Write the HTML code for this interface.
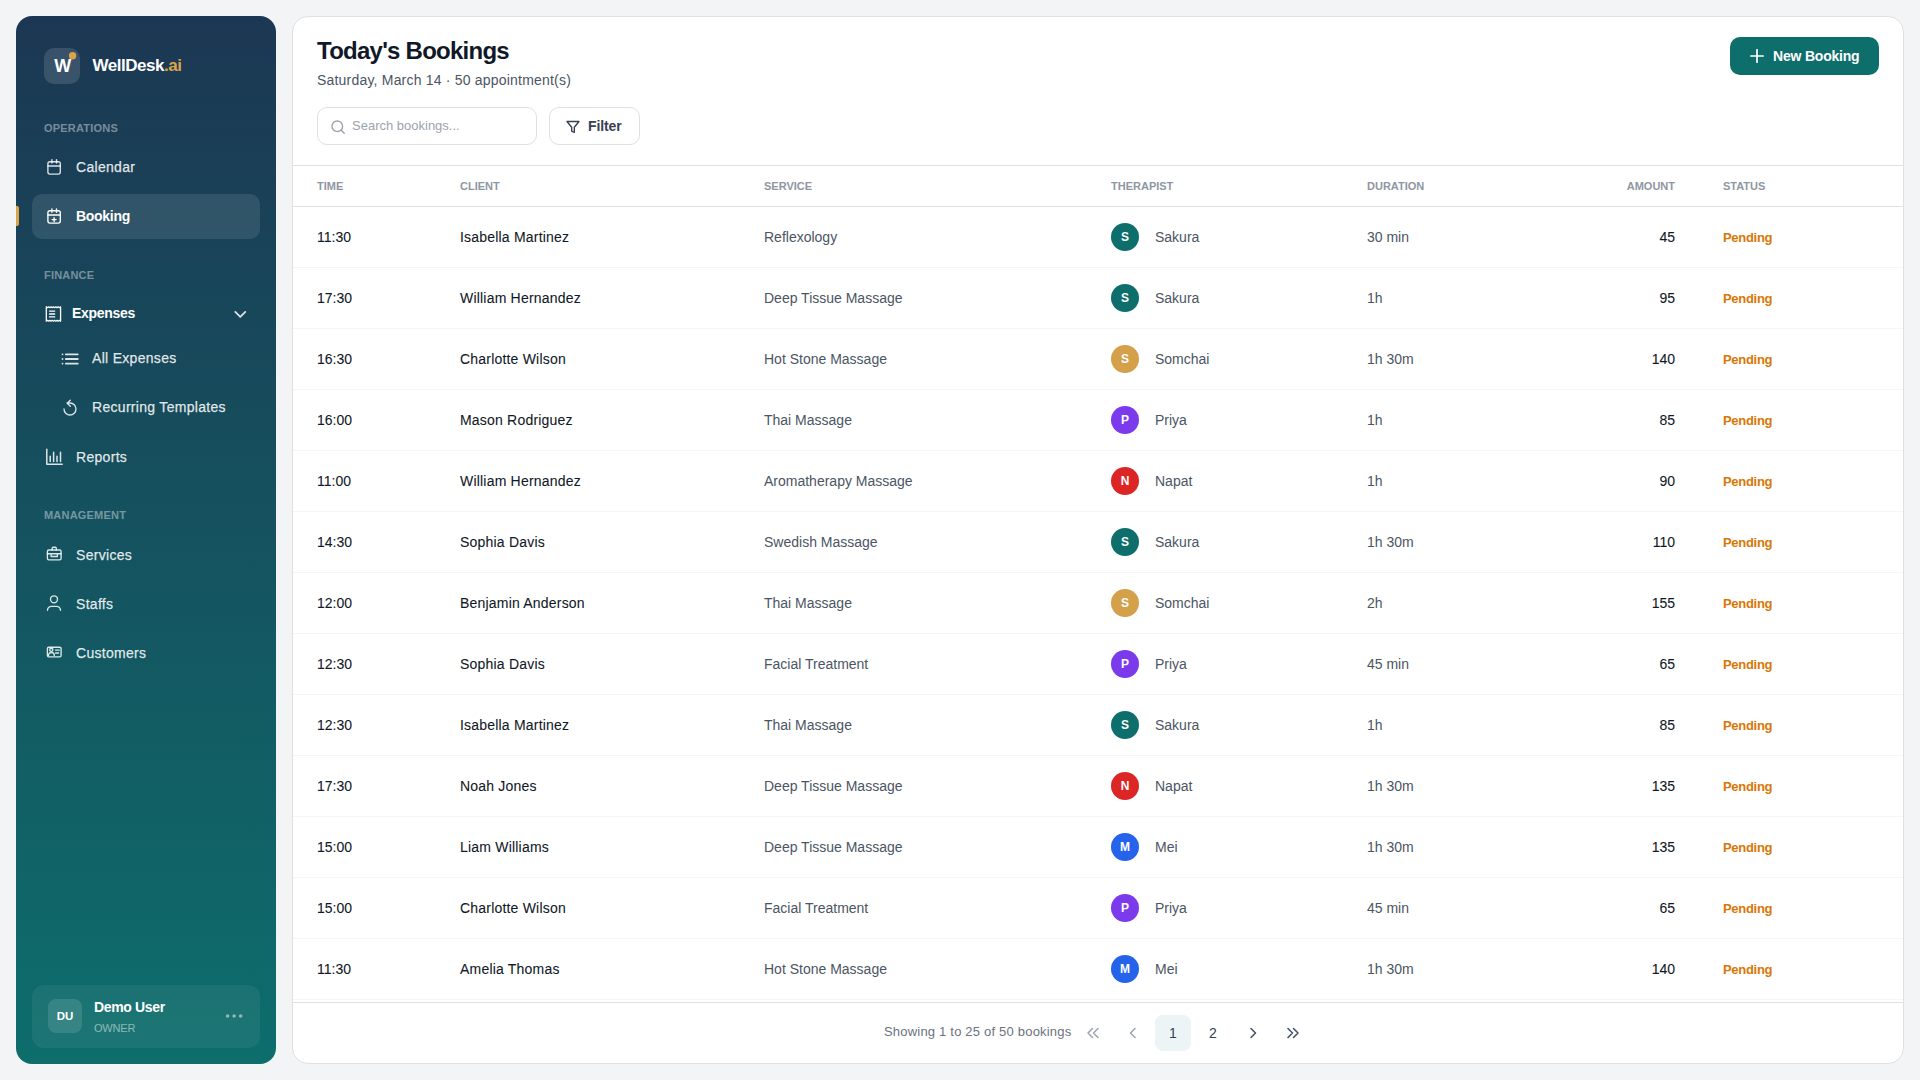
<!DOCTYPE html>
<html><head><meta charset="utf-8"><title>WellDesk.ai - Bookings</title>
<style>
*{box-sizing:border-box;margin:0;padding:0}
html,body{width:1920px;height:1080px;overflow:hidden}
body{background:#f3f4f6;font-family:"Liberation Sans",sans-serif;position:relative;color:#111827}
.sb{position:absolute;left:16px;top:16px;width:260px;height:1048px;border-radius:16px;background:linear-gradient(180deg,#1c3753 0%,#0d6e6c 100%);overflow:hidden}
.abs{position:absolute;white-space:nowrap}
.lbl{font-size:11px;line-height:11px;font-weight:700;color:rgba(255,255,255,0.42);letter-spacing:0.2px}
.nav{font-size:14px;line-height:14px;color:rgba(255,255,255,0.86);letter-spacing:0.3px;-webkit-text-stroke:0.25px rgba(255,255,255,0.8)}
.navb{font-size:14px;line-height:14px;font-weight:700;color:#fff;letter-spacing:-0.3px}
.logo{left:44px;top:48px;width:36px;height:36px;border-radius:10px;background:rgba(255,255,255,0.13)}
.logo b{position:absolute;left:0;top:0;width:36px;text-align:center;font-size:18px;line-height:18px;top:56px}
.active{left:32px;top:194px;width:228px;height:45px;border-radius:10px;background:rgba(255,255,255,0.1)}
.ind{left:16px;top:206px;width:3px;height:20px;border-radius:0 2px 2px 0;background:#d9a54a}
.ucard{left:32px;top:985px;width:228px;height:63px;border-radius:12px;background:rgba(255,255,255,0.06)}
.uav{left:48px;top:999px;width:34px;height:34px;border-radius:8px;background:rgba(255,255,255,0.12);color:#fff;font-weight:700;font-size:11.5px;line-height:34.5px;text-align:center}
.card{position:absolute;left:292px;top:16px;width:1612px;height:1048px;background:#fff;border:1px solid #e0e0e0;border-radius:16px;overflow:hidden}
.card .abs{position:absolute}
.title{left:24px;top:22px;font-size:24px;line-height:24px;font-weight:700;color:#111827;letter-spacing:-0.75px}
.sub{left:24px;top:55.6px;font-size:14px;line-height:14px;color:#4b5563;letter-spacing:0.2px}
.search{left:24px;top:90px;width:220px;height:38px;border:1px solid #e0e0e0;border-radius:10px}
.search span{position:absolute;left:34px;top:11px;font-size:13px;line-height:13px;color:#9ca3af}
.filter{left:256px;top:90px;width:91px;height:38px;border:1px solid #e0e0e0;border-radius:10px}
.filter span{position:absolute;left:38px;top:11px;font-size:14px;line-height:14px;font-weight:700;color:#374151;letter-spacing:-0.1px}
.btn{left:1437px;top:20px;width:149px;height:38px;border-radius:10px;background:#0d6e6c}
.btn span{position:absolute;left:43px;top:12px;font-size:14px;line-height:14px;font-weight:700;color:#fff;letter-spacing:-0.2px}
.tbl{position:absolute;left:0;top:148px;width:1610px;height:837px;border-top:1px solid #e0e0e0;overflow:hidden}
.thead,.row{display:flex;align-items:center;width:1610px}
.thead{height:41px;border-bottom:1px solid #e0e0e0;font-size:11px;font-weight:700;color:#8f96a3;letter-spacing:0px}
.row{height:61px;border-bottom:1px solid #f5f5f5;font-size:14px}
.c1{width:143px;padding-left:24px}
.c2{width:304px;padding-left:24px}
.c3{width:347px;padding-left:24px}
.c4{width:256px;padding-left:24px;display:flex;align-items:center}
.c5{width:200px;padding-left:24px}
.c6{width:156px;padding-right:24px;text-align:right}
.c7{width:204px;padding-left:24px}
.row .c1,.row .c2,.row .c6{color:#111827;-webkit-text-stroke:0.08px #111827}
.row .c2{letter-spacing:0.2px}
.row .c3,.row .c5,.row .thn{color:#4b5563}
.row .c7{color:#d97706;font-weight:700;font-size:13px;letter-spacing:-0.3px}
.av{display:inline-block;width:28px;height:28px;border-radius:50%;color:#fff;font-size:12px;font-weight:700;line-height:28px;text-align:center;margin-right:16px}
.av.t{background:#0d6e6c}.av.g{background:#d4a04a}.av.p{background:#7c3aed}.av.r{background:#dc2626}.av.b{background:#2563eb}
.foot{position:absolute;left:0;top:985px;width:1610px;height:61px;border-top:1px solid #e0e0e0}
.show{left:591px;top:22.2px;font-size:13px;line-height:13px;color:#6b7280;letter-spacing:0.2px}
.pg{position:absolute;top:12px;width:36px;height:36px;border-radius:8px;text-align:center;line-height:36px;font-size:14px;color:#334155}
.pg.on{background:#ecf4f5}
.pg svg{position:absolute;left:11px;top:11px}

</style></head><body>
<div class="sb"></div>
<div class="abs logo"></div>
<svg class="abs" style="left:0;top:0" width="280" height="1080" viewBox="0 0 280 1080" fill="none">
<circle cx="72.6" cy="55.8" r="3.7" fill="#d9a54a"/>
</svg>
<div class="abs" style="left:44.5px;top:56.5px;width:36px;text-align:center;font-size:18px;line-height:18px;font-weight:700;color:#fff;letter-spacing:-0.5px">W</div>
<div class="abs" style="left:92.4px;top:57px;font-size:17px;line-height:17px;font-weight:700;color:#fff;letter-spacing:-0.45px">WellDesk<span style="color:#d9a54a">.ai</span></div>
<div class="abs lbl" style="left:44px;top:123px">OPERATIONS</div>
<div class="abs active"></div>
<div class="abs ind"></div>
<div class="abs nav" style="left:76px;top:159.8px">Calendar</div>
<div class="abs navb" style="left:76px;top:209px">Booking</div>
<div class="abs lbl" style="left:44px;top:269.5px">FINANCE</div>
<div class="abs navb" style="left:72px;top:305.6px">Expenses</div>
<div class="abs nav" style="left:92px;top:351px">All Expenses</div>
<div class="abs nav" style="left:92px;top:400px">Recurring Templates</div>
<div class="abs nav" style="left:76px;top:449.5px">Reports</div>
<div class="abs lbl" style="left:44px;top:510px">MANAGEMENT</div>
<div class="abs nav" style="left:76px;top:547.5px">Services</div>
<div class="abs nav" style="left:76px;top:596.5px">Staffs</div>
<div class="abs nav" style="left:76px;top:645.5px">Customers</div>
<div class="abs ucard"></div>
<div class="abs uav">DU</div>
<div class="abs" style="left:94px;top:1000px;font-size:14px;line-height:14px;font-weight:700;color:#fff;letter-spacing:-0.35px">Demo User</div>
<div class="abs" style="left:94px;top:1022.7px;font-size:11px;line-height:11px;color:rgba(255,255,255,0.5);letter-spacing:-0.2px">OWNER</div>
<svg class="abs" style="left:0;top:0" width="280" height="1080" viewBox="0 0 280 1080" fill="none" stroke="rgba(255,255,255,0.85)" stroke-width="1.35" stroke-linecap="round" stroke-linejoin="round">
<!-- calendar -->
<rect x="47.9" y="161.7" width="12.4" height="12.4" rx="2"/>
<path d="M51.9 159.6v3.4M56.5 159.6v3.4M47.9 166h12.4"/>
<!-- booking calendar plus -->
<g stroke="#fff">
<rect x="47.9" y="210.7" width="12.4" height="12.4" rx="2"/>
<path d="M51.9 208.8v3.4M56.5 208.8v3.4M47.9 215h12.4M54.1 217.6v4M52.1 219.6h4"/>
</g>
<!-- receipt -->
<g stroke="#fff" stroke-width="1.3">
<path d="M46.3 306.8v14.4l1.19-.9 1.19.9 1.19-.9 1.19.9 1.19-.9 1.19.9 1.19-.9 1.19.9 1.19-.9 1.19.9 1.19-.9 1.19.9V306.8l-1.19.9-1.19-.9-1.19.9-1.19-.9-1.19.9-1.19-.9-1.19.9-1.19-.9-1.19.9-1.19-.9-1.19.9Z"/>
<path d="M49.5 311.1h5.2M49.5 314h5.2M49.5 316.9h5.2"/>
</g>
<!-- list -->
<path stroke-width="1.8" d="M62.5 354.3h.01M62.5 359h.01M62.5 363.6h.01M65.8 354.3h12M65.8 359h12M65.8 363.6h12"/>
<!-- rotate -->
<path d="M64 409A6 6 0 1 0 70 403H67M70.3 400.3L67.2 403.2l3.1 3"/>
<!-- reports -->
<path d="M46.8 449.2v15.1h15.4M50.2 461.6v-5.4M53.6 461.6v-9.4M57 461.6v-5.4M60.5 461.6v-9.4" stroke-width="1.5"/>
<!-- services briefcase -->
<rect x="47.4" y="550" width="13.7" height="9.8" rx="1.4"/>
<path d="M52.2 550v-1.8a1 1 0 0 1 1-1h2.1a1 1 0 0 1 1 1v1.8M47.4 553.7h13.7M51.1 554v2.5h6.3V554"/>
<!-- staffs user -->
<circle cx="54" cy="599.3" r="3.5"/>
<path d="M47.5 610.3a4.2 4.2 0 0 1 4.2-3.9h4.6a4.2 4.2 0 0 1 4.2 3.9"/>
<!-- customers id card -->
<rect x="47.4" y="647.2" width="13.7" height="9.7" rx="1.4"/>
<circle cx="51.3" cy="649.8" r="1.6"/>
<path d="M48.5 655.4a2.9 2.9 0 0 1 5.8 0M55.6 650.1h3.7M55.6 653h3"/>
<!-- chevron -->
<path d="M235.3 311.9l5 5 5-5" stroke-width="1.8"/>
<!-- dots -->
<g fill="rgba(255,255,255,0.5)" stroke="none">
<circle cx="227.6" cy="1016" r="1.8"/><circle cx="234.1" cy="1016" r="1.8"/><circle cx="240.6" cy="1016" r="1.8"/>
</g>
</svg>

<div class="card">
<div class="abs title">Today's Bookings</div>
<div class="abs sub">Saturday, March 14 · 50 appointment(s)</div>
<div class="abs search"><svg style="position:absolute;left:12px;top:11px" width="16" height="16" viewBox="0 0 16 16" fill="none" stroke="#9ca3af" stroke-width="1.4" stroke-linecap="round"><circle cx="7.3" cy="7.3" r="5.3"/><path d="M11.2 11.2l3 3"/></svg><span>Search bookings...</span></div>
<div class="abs filter"><svg style="position:absolute;left:15px;top:11px" width="16" height="16" viewBox="0 0 16 16" fill="none" stroke="#374151" stroke-width="1.35" stroke-linejoin="round" stroke-linecap="round"><path d="M2 2.5h12L9.3 8.2v5.3l-2.6-1.3V8.2Z"/></svg><span>Filter</span></div>
<div class="abs btn"><svg style="position:absolute;left:20px;top:12px" width="14" height="14" viewBox="0 0 14 14" fill="none" stroke="#fff" stroke-width="1.7" stroke-linecap="round"><path d="M7 0.8v12.4M0.8 7h12.4"/></svg><span>New Booking</span></div>

<div class="tbl">
<div class="thead"><div class="c1">TIME</div><div class="c2">CLIENT</div><div class="c3">SERVICE</div><div class="c4">THERAPIST</div><div class="c5">DURATION</div><div class="c6">AMOUNT</div><div class="c7">STATUS</div></div>
<div class="row"><div class="c1">11:30</div><div class="c2">Isabella Martinez</div><div class="c3">Reflexology</div><div class="c4"><span class="av t">S</span><span class="thn">Sakura</span></div><div class="c5">30 min</div><div class="c6">45</div><div class="c7">Pending</div></div><div class="row"><div class="c1">17:30</div><div class="c2">William Hernandez</div><div class="c3">Deep Tissue Massage</div><div class="c4"><span class="av t">S</span><span class="thn">Sakura</span></div><div class="c5">1h</div><div class="c6">95</div><div class="c7">Pending</div></div><div class="row"><div class="c1">16:30</div><div class="c2">Charlotte Wilson</div><div class="c3">Hot Stone Massage</div><div class="c4"><span class="av g">S</span><span class="thn">Somchai</span></div><div class="c5">1h 30m</div><div class="c6">140</div><div class="c7">Pending</div></div><div class="row"><div class="c1">16:00</div><div class="c2">Mason Rodriguez</div><div class="c3">Thai Massage</div><div class="c4"><span class="av p">P</span><span class="thn">Priya</span></div><div class="c5">1h</div><div class="c6">85</div><div class="c7">Pending</div></div><div class="row"><div class="c1">11:00</div><div class="c2">William Hernandez</div><div class="c3">Aromatherapy Massage</div><div class="c4"><span class="av r">N</span><span class="thn">Napat</span></div><div class="c5">1h</div><div class="c6">90</div><div class="c7">Pending</div></div><div class="row"><div class="c1">14:30</div><div class="c2">Sophia Davis</div><div class="c3">Swedish Massage</div><div class="c4"><span class="av t">S</span><span class="thn">Sakura</span></div><div class="c5">1h 30m</div><div class="c6">110</div><div class="c7">Pending</div></div><div class="row"><div class="c1">12:00</div><div class="c2">Benjamin Anderson</div><div class="c3">Thai Massage</div><div class="c4"><span class="av g">S</span><span class="thn">Somchai</span></div><div class="c5">2h</div><div class="c6">155</div><div class="c7">Pending</div></div><div class="row"><div class="c1">12:30</div><div class="c2">Sophia Davis</div><div class="c3">Facial Treatment</div><div class="c4"><span class="av p">P</span><span class="thn">Priya</span></div><div class="c5">45 min</div><div class="c6">65</div><div class="c7">Pending</div></div><div class="row"><div class="c1">12:30</div><div class="c2">Isabella Martinez</div><div class="c3">Thai Massage</div><div class="c4"><span class="av t">S</span><span class="thn">Sakura</span></div><div class="c5">1h</div><div class="c6">85</div><div class="c7">Pending</div></div><div class="row"><div class="c1">17:30</div><div class="c2">Noah Jones</div><div class="c3">Deep Tissue Massage</div><div class="c4"><span class="av r">N</span><span class="thn">Napat</span></div><div class="c5">1h 30m</div><div class="c6">135</div><div class="c7">Pending</div></div><div class="row"><div class="c1">15:00</div><div class="c2">Liam Williams</div><div class="c3">Deep Tissue Massage</div><div class="c4"><span class="av b">M</span><span class="thn">Mei</span></div><div class="c5">1h 30m</div><div class="c6">135</div><div class="c7">Pending</div></div><div class="row"><div class="c1">15:00</div><div class="c2">Charlotte Wilson</div><div class="c3">Facial Treatment</div><div class="c4"><span class="av p">P</span><span class="thn">Priya</span></div><div class="c5">45 min</div><div class="c6">65</div><div class="c7">Pending</div></div><div class="row"><div class="c1">11:30</div><div class="c2">Amelia Thomas</div><div class="c3">Hot Stone Massage</div><div class="c4"><span class="av b">M</span><span class="thn">Mei</span></div><div class="c5">1h 30m</div><div class="c6">140</div><div class="c7">Pending</div></div><div class="row"><div class="c1">14:00</div><div class="c2">Olivia Brown</div><div class="c3">Swedish Massage</div><div class="c4"><span class="av t">S</span><span class="thn">Sakura</span></div><div class="c5">1h</div><div class="c6">95</div><div class="c7">Pending</div></div>
</div>
<div class="foot">
<div class="abs show">Showing 1 to 25 of 50 bookings</div>
<div class="pg" style="left:782px"><svg width="14" height="14" viewBox="0 0 14 14" fill="none" stroke="#9ca3af" stroke-width="1.5" stroke-linecap="round" stroke-linejoin="round"><path d="M6.5 2.5L2 7l4.5 4.5M12 2.5L7.5 7l4.5 4.5"/></svg></div>
<div class="pg" style="left:822px"><svg width="14" height="14" viewBox="0 0 14 14" fill="none" stroke="#9ca3af" stroke-width="1.5" stroke-linecap="round" stroke-linejoin="round"><path d="M9 2.5L4.5 7 9 11.5"/></svg></div>
<div class="pg on" style="left:862px">1</div>
<div class="pg" style="left:902px">2</div>
<div class="pg" style="left:942px"><svg width="14" height="14" viewBox="0 0 14 14" fill="none" stroke="#475569" stroke-width="1.6" stroke-linecap="round" stroke-linejoin="round"><path d="M5 2.5L9.5 7 5 11.5"/></svg></div>
<div class="pg" style="left:982px"><svg width="14" height="14" viewBox="0 0 14 14" fill="none" stroke="#475569" stroke-width="1.6" stroke-linecap="round" stroke-linejoin="round"><path d="M2 2.5L6.5 7 2 11.5M7.5 2.5L12 7l-4.5 4.5"/></svg></div>
</div>

</div>
</body></html>
